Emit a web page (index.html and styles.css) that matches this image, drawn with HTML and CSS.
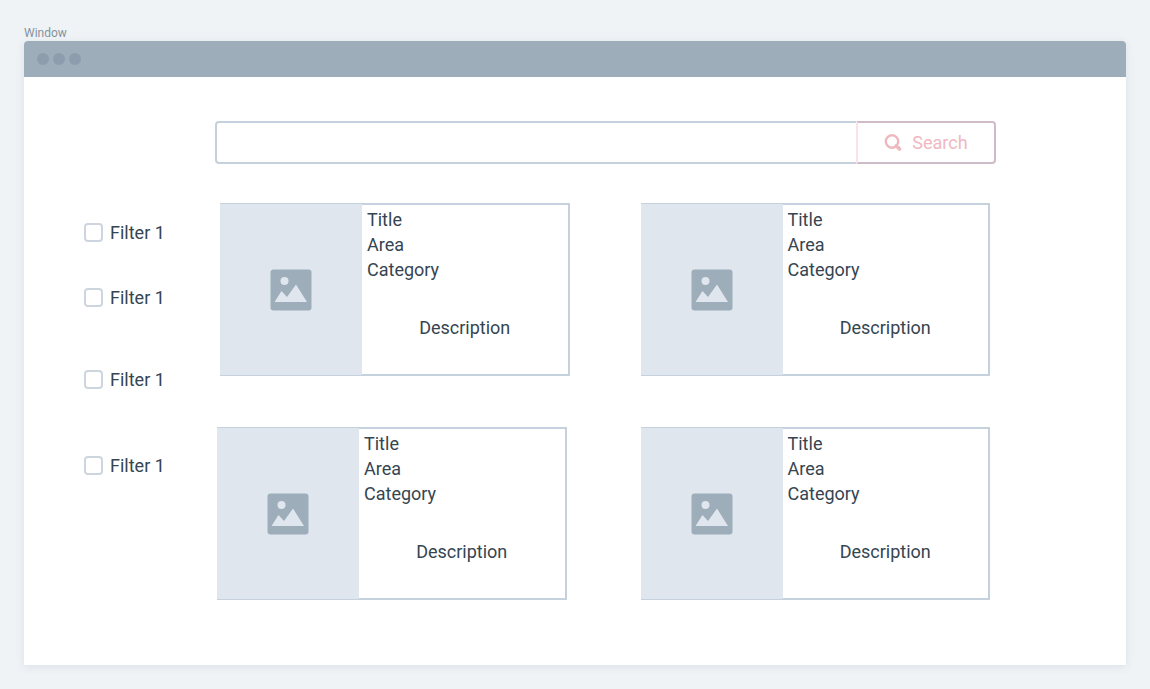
FILE: index.html
```html
<!DOCTYPE html>
<html lang="en">
<head>
<meta charset="utf-8">
<title>Window</title>
<link rel="stylesheet" href="styles.css">
</head>
<body>
<svg class="defs" aria-hidden="true">
  <symbol id="picture" viewBox="0 0 42 42">
    <rect x="0.5" y="0.5" width="41" height="41" rx="3" fill="#9eadba"/>
    <circle cx="14.5" cy="12" r="4" fill="#dfe6ee"/>
    <path d="M4.5 33 L11.5 22 L17 28 L26 15.500 L37 33 Z" fill="#dfe6ee"/>
  </symbol>
</svg>
<p class="window-label">Window</p>
<div class="window">
  <header class="titlebar"><span class="dot"></span><span class="dot"></span><span class="dot"></span></header>
  <div class="page">
    <form class="search" role="search">
      <input class="search-input" type="text" aria-label="Search text">
      <button class="search-button" type="button">
        <svg class="search-icon" viewBox="0 0 18 18" aria-hidden="true"><circle cx="8" cy="7.500" r="6.200" fill="none" stroke="currentColor" stroke-width="2.400"/><path d="M12 11.500 L15.500 15" stroke="currentColor" stroke-width="2.600" stroke-linecap="round"/><path d="M13.800 13.300 L15.500 15" stroke="currentColor" stroke-width="3.600" stroke-linecap="round"/></svg>
        Search
      </button>
    </form>
    <div class="columns">
      <aside class="filters">
        <label class="filter"><input class="check" type="checkbox">Filter 1</label>
        <label class="filter filter-second"><input class="check" type="checkbox">Filter 1</label>
        <label class="filter filter-third"><input class="check" type="checkbox">Filter 1</label>
        <label class="filter filter-fourth"><input class="check" type="checkbox">Filter 1</label>
      </aside>
      <main class="results">
        <div class="row row-first">
          <article class="card"><div class="thumb"><svg class="picture"><use href="#picture"/></svg></div><div class="info"><p>Title</p><p>Area</p><p>Category</p><p class="description">Description</p></div></article>
          <article class="card"><div class="thumb"><svg class="picture"><use href="#picture"/></svg></div><div class="info"><p>Title</p><p>Area</p><p>Category</p><p class="description">Description</p></div></article>
        </div>
        <div class="row row-second">
          <article class="card"><div class="thumb"><svg class="picture"><use href="#picture"/></svg></div><div class="info"><p>Title</p><p>Area</p><p>Category</p><p class="description">Description</p></div></article>
          <article class="card"><div class="thumb"><svg class="picture"><use href="#picture"/></svg></div><div class="info"><p>Title</p><p>Area</p><p>Category</p><p class="description">Description</p></div></article>
        </div>
      </main>
    </div>
  </div>
</div>
</body>
</html>
```
FILE: styles.css
```css
* { box-sizing: border-box; }
body {
  margin: 0;
  padding: 25px 24px 24px;
  background: #eff3f6;
  color: #354551;
  font: 18px/25px Roboto, "Liberation Sans", sans-serif;
}
p { margin: 0; }
.defs { display: none; }
.window-label { font-size: 12px; line-height: 16px; color: #84929f; }
.window {
  background: #fff;
  border-radius: 4px 4px 0 0;
  box-shadow: 0 2px 8px rgba(60, 80, 100, 0.1);
}
.titlebar {
  display: flex;
  align-items: center;
  gap: 4px;
  height: 36px;
  padding-left: 13px;
  background: #9eadba;
  border-radius: 4px 4px 0 0;
}
.dot { width: 12px; height: 12px; border-radius: 50%; background: #8e9dad; }
.page { padding: 44px 130px 65px 60px; }
.search { display: flex; height: 43px; margin-left: 131px; }
.search-input {
  flex: 1;
  min-width: 0;
  padding: 0 12px;
  border: 2px solid #c5d1dc;
  border-right: 0;
  border-radius: 4px 0 0 4px;
  background: #fff;
  font: inherit;
  color: inherit;
}
.search-button {
  display: flex;
  align-items: center;
  justify-content: center;
  gap: 10px;
  width: 140px;
  padding: 0;
  border: 2px solid #cdbcc8;
  border-left-color: #f9e3e6;
  border-radius: 0 4px 4px 0;
  background: #fff;
  color: #efb8c1;
  font: inherit;
}
.search-icon { width: 18px; height: 18px; }
.columns { display: flex; margin-top: 39px; }
.filters { width: 131px; padding-top: 17px; }
.filter { display: flex; align-items: center; gap: 7px; }
.filter-second { margin-top: 40px; }
.filter-third { margin-top: 57px; }
.filter-fourth { margin-top: 61px; }
.check {
  appearance: none;
  width: 19px;
  height: 19px;
  margin: 0;
  border: 2px solid #cdd6de;
  border-radius: 4px;
  background: #fff;
}
.check:checked { background: #9eadba; }
.results { flex: 1; display: flex; flex-direction: column; gap: 51px; }
.row { display: flex; }
.row-first { gap: 71px; padding: 0 6px 0 5px; }
.row-second { gap: 74px; padding: 0 6px 0 2px; }
.card {
  flex: 1;
  display: flex;
  border: 2px solid #c5d1dc;
  border-left: 0;
}
.thumb {
  display: flex;
  align-items: center;
  justify-content: center;
  width: 142px;
  margin: -1px 0;
  background: #dfe6ee;
}
.picture { width: 42px; height: 42px; }
.info { flex: 1; padding: 2px 0 34px 5px; }
.description { margin-top: 33px; padding-right: 5px; text-align: center; }
```
